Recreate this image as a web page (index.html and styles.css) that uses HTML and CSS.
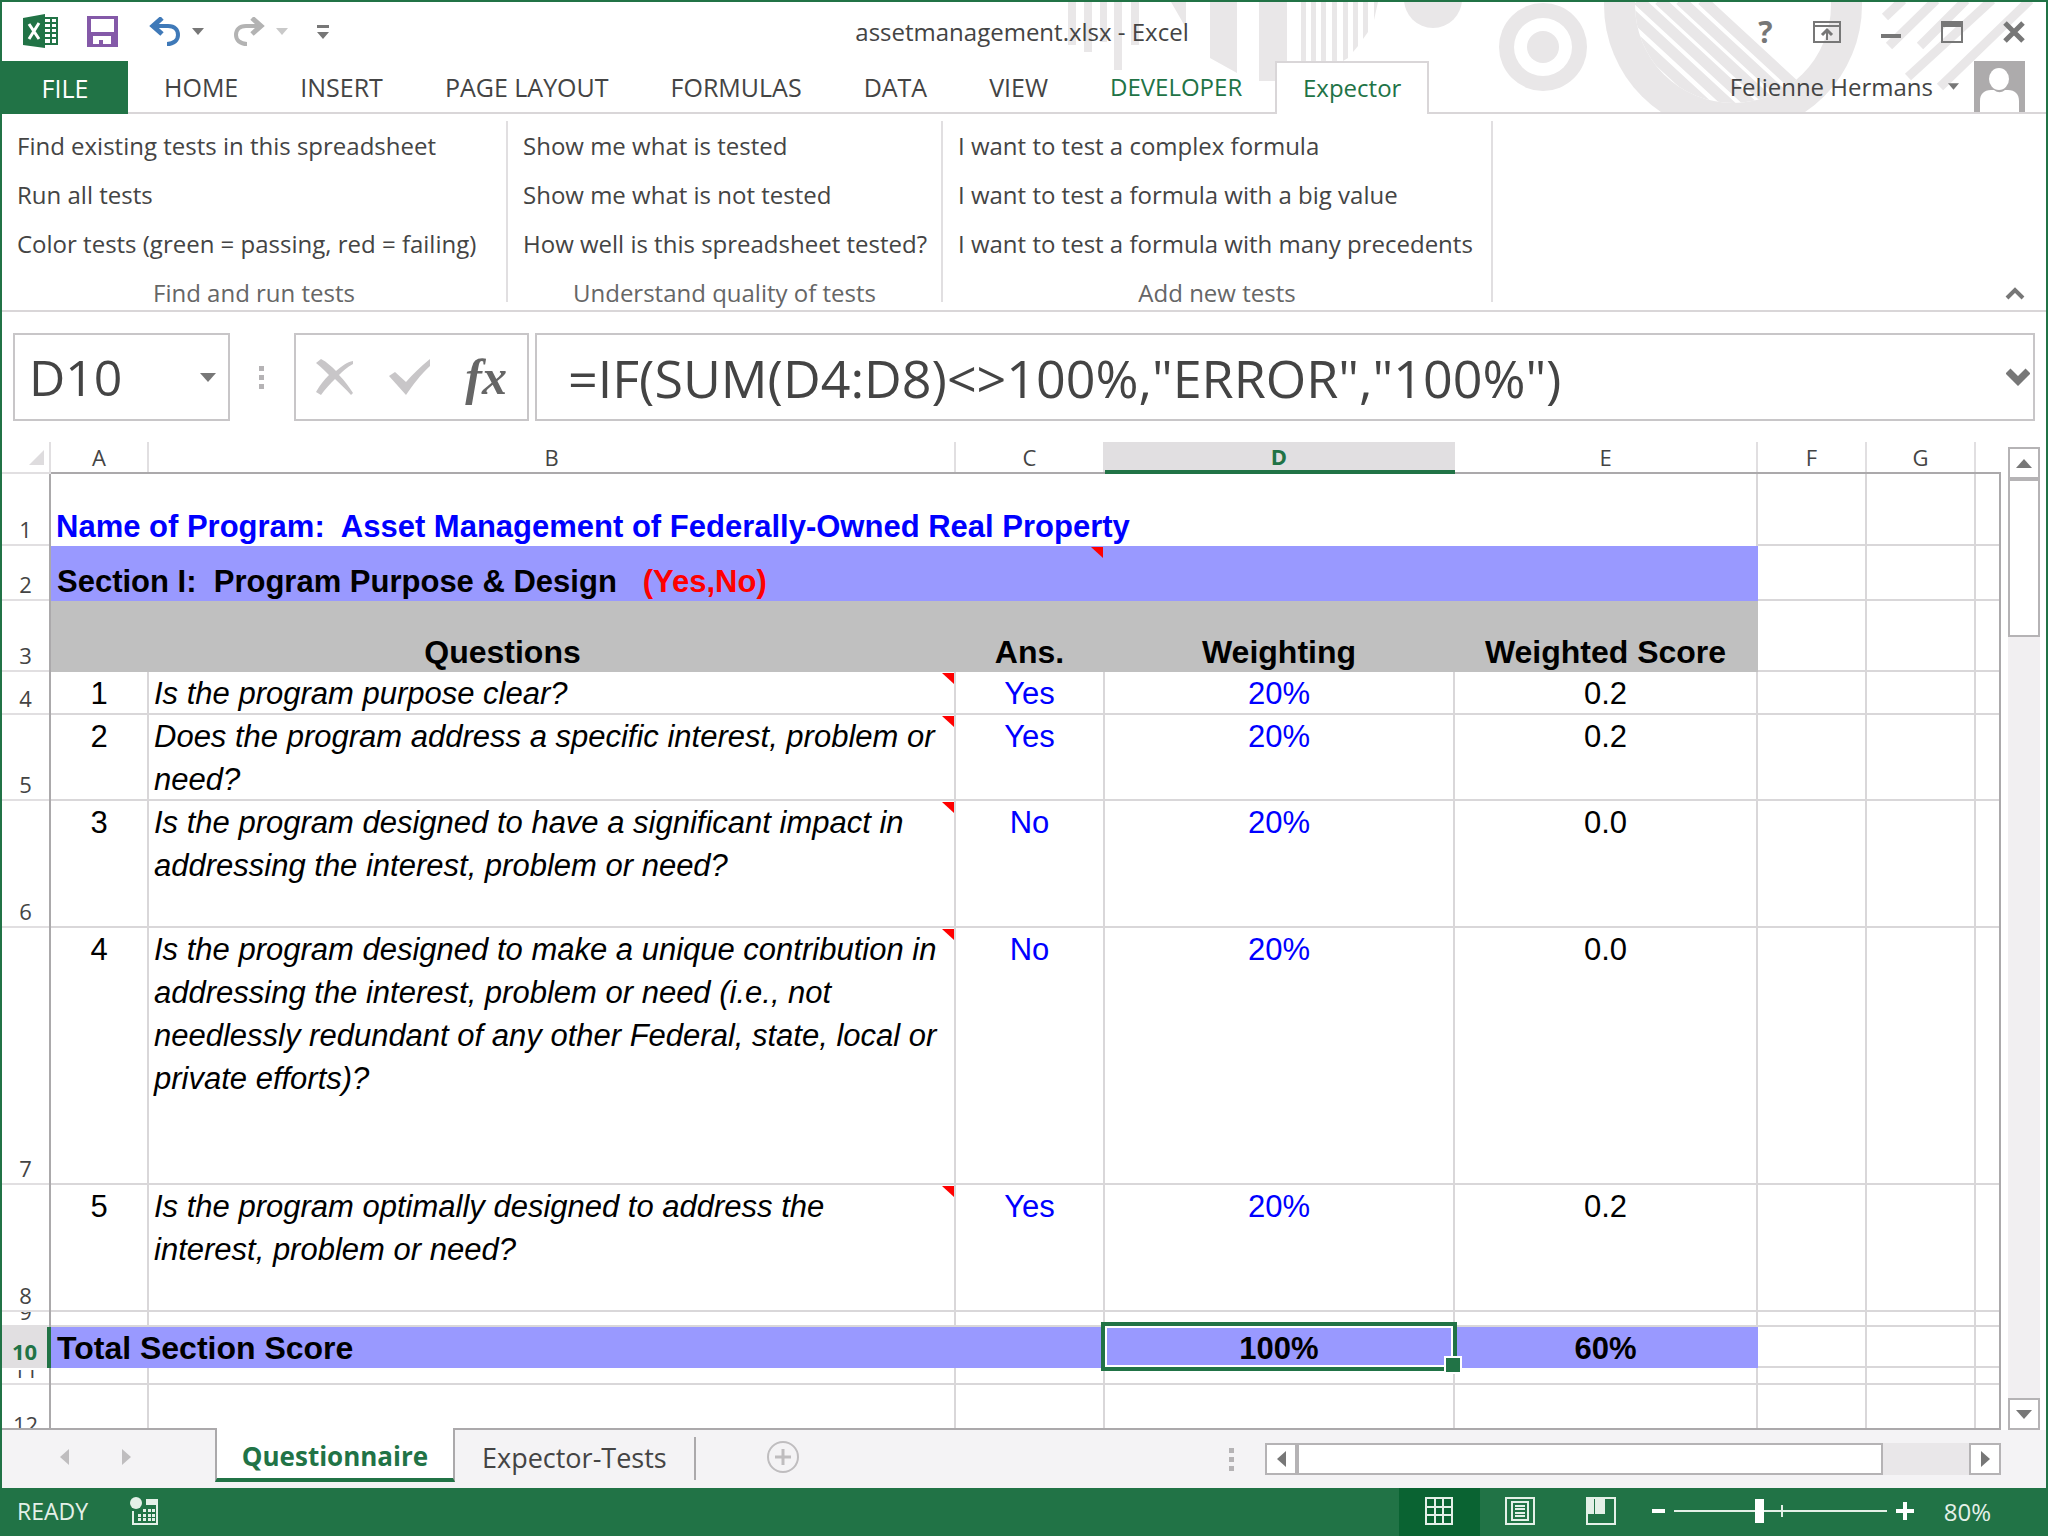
FILE: index.html
```html
<!DOCTYPE html>
<html lang="en">
  <head>
    <meta charset="UTF-8" />
    <meta name="viewport" content="width=device-width, initial-scale=1.0" />
    <title>assetmanagement.xlsx - Excel</title>
    <link rel="stylesheet" href="styles.css">
  </head>
  <body>
    <header class="app-header">
      <svg class="header-art" width="986" height="110" viewBox="1060 2 986 110" aria-hidden="true">
        <defs>
          <clipPath id="ringHole"><circle cx="1733" cy="5" r="98" /></clipPath>
        </defs>
        <g fill="#e9e7e8">
          <path d="M1068 2h8v43h-8zM1084 2h8v50h-8zM1100 2h7v40h-7zM1114 2h8v68h-8zM1131 2h8v43h-8z" />
          <path d="M1171 2h15v26zM1210 2h27v71l-27-15zM1259 2h28v79h-28z" />
          <path d="M1301 2h5v59h-5zM1311 2h5v59h-5zM1321 2h5v59h-5zM1332 2h5v59h-5zM1343 2h5v56l-5 3zM1353 2h5v44l-5 6zM1363 2h5v30l-5 7zM1374 2h4l-4 18z" />
          <circle cx="1433" cy="-1" r="29" />
          <circle cx="1543" cy="47" r="44" />
          <circle cx="1733" cy="5" r="129" />
        </g>
        <circle cx="1543" cy="47" r="29" fill="#fff" />
        <circle cx="1543" cy="47" r="16" fill="#e9e7e8" />
        <circle cx="1733" cy="5" r="98" fill="#fff" />
        <g clip-path="url(#ringHole)" stroke="#e9e7e8" stroke-width="11">
          <path d="M1593 0l130 120M1616 0l130 120M1638 0l130 120M1659 0l130 120M1680 0l130 120M1702 0l130 120" />
        </g>
        <path d="M1885 17l18-17M1889 46l47-46M1920 46l46-46M1908 77l84-77M1940 87l90-87" stroke="#e9e7e8" stroke-width="9" />
      </svg>

      <div class="titlebar">
        <div class="quick-access">
          <svg class="excel-logo" width="36" height="36" viewBox="0 0 36 36">
            <path fill="#fff" stroke="#217346" stroke-width="2" d="M20 4h14v26H20z" />
            <path stroke="#217346" stroke-width="2" d="M20 9h14M20 14h14M20 19h14M20 24h14M28 4v26" />
            <path fill="#217346" d="M0 4l22-4v34L0 31z" />
            <path stroke="#fff" stroke-width="3" d="M6 10l10 15M16 9L6 25" />
          </svg>
          <button type="button" class="qa-btn qa-save" aria-label="Save">
            <svg width="31" height="31" viewBox="0 0 31 31">
              <path fill="#8459a8" d="M0 0h31v31H0z" />
              <path fill="#fff" d="M4 3h23v13H4zM6 20h18v8h-8v-4h-4v4H6z" />
            </svg>
          </button>
          <button type="button" class="qa-btn qa-undo" aria-label="Undo">
            <svg width="32" height="30" viewBox="0 0 32 30" fill="none" stroke="#3f79b8">
              <path stroke-width="4" d="M5 9h14c7 0 10 4 10 9s-4 9-11 9" />
              <path stroke-width="5" d="M13 1L4 9l9 8" />
            </svg>
          </button>
          <button type="button" class="qa-btn qa-undo-menu" aria-label="Undo list"><svg width="12" height="7" viewBox="0 0 12 7"><path fill="#777" d="M0 0h12L6 7z" /></svg></button>
          <button type="button" class="qa-btn qa-redo" aria-label="Redo">
            <svg width="32" height="30" viewBox="0 0 32 30" fill="none" stroke="#b3b3b3">
              <path stroke-width="4" d="M27 9H13C6 9 3 13 3 18s4 9 11 9" />
              <path stroke-width="5" d="M19 1l9 8-9 8" />
            </svg>
          </button>
          <button type="button" class="qa-btn qa-redo-menu" aria-label="Redo list"><svg width="12" height="7" viewBox="0 0 12 7"><path fill="#c9c9c9" d="M0 0h12L6 7z" /></svg></button>
          <button type="button" class="qa-btn qa-custom" aria-label="Customize toolbar"><svg width="12" height="14" viewBox="0 0 12 14"><path fill="#777" d="M0 0h12v3H0zM0 7h12l-6 7z" /></svg></button>
        </div>
        <h1 class="doc-title">assetmanagement.xlsx - Excel</h1>
        <div class="window-buttons">
          <button type="button" class="win-btn win-help">?</button>
          <button type="button" class="win-btn" aria-label="Ribbon display">
            <svg width="28" height="22" viewBox="0 0 28 22" fill="none" stroke="#777" stroke-width="2">
              <path d="M1 1h26v20H1zM1 5h26M14 19V9" /><path stroke-width="3" d="M9 14l5-5 5 5" />
            </svg>
          </button>
          <button type="button" class="win-btn" aria-label="Minimize">
            <svg width="20" height="22" viewBox="0 0 20 22"><path fill="#777" d="M0 13h20v4H0z" /></svg>
          </button>
          <button type="button" class="win-btn" aria-label="Maximize">
            <svg width="22" height="22" viewBox="0 0 22 22"><path fill="#777" d="M0 0h22v22H0zM2 6v14h18V6z" fill-rule="evenodd" /></svg>
          </button>
          <button type="button" class="win-btn" aria-label="Close">
            <svg width="22" height="22" viewBox="0 0 22 22"><path stroke="#777" stroke-width="5" d="M2 2l18 18M20 2L2 20" /></svg>
          </button>
        </div>
      </div>

      <nav class="tabs">
        <button type="button" class="tab tab-file">FILE</button>
        <button type="button" class="tab">HOME</button>
        <button type="button" class="tab">INSERT</button>
        <button type="button" class="tab">PAGE LAYOUT</button>
        <button type="button" class="tab">FORMULAS</button>
        <button type="button" class="tab">DATA</button>
        <button type="button" class="tab">VIEW</button>
        <button type="button" class="tab tab-green">DEVELOPER</button>
        <button type="button" class="tab tab-green tab-active">Expector</button>
        <button type="button" class="account">
          Felienne Hermans
          <svg width="11" height="7" viewBox="0 0 12 7"><path fill="#777" d="M0 0h12L6 7z" /></svg>
          <svg class="avatar" width="51" height="51" viewBox="0 0 51 51">
            <path fill="#adabac" d="M0 0h51v51H0z" />
            <path fill="#fff" d="M6 51V40c0-7 4-11 11-11h3c4 3 7 3 11 0h3c7 0 11 4 11 11v11z" />
            <ellipse cx="25" cy="18" rx="10" ry="11" fill="#fff" />
          </svg>
        </button>
      </nav>
    </header>

    <section class="ribbon">
      <div class="ribbon-group group-find">
        <button type="button" class="ribbon-btn">Find existing tests in this spreadsheet</button>
        <button type="button" class="ribbon-btn">Run all tests</button>
        <button type="button" class="ribbon-btn">Color tests (green = passing, red = failing)</button>
        <div class="group-name">Find and run tests</div>
      </div>
      <div class="ribbon-group group-quality">
        <button type="button" class="ribbon-btn">Show me what is tested</button>
        <button type="button" class="ribbon-btn">Show me what is not tested</button>
        <button type="button" class="ribbon-btn">How well is this spreadsheet tested?</button>
        <div class="group-name">Understand quality of tests</div>
      </div>
      <div class="ribbon-group group-new">
        <button type="button" class="ribbon-btn">I want to test a complex formula</button>
        <button type="button" class="ribbon-btn">I want to test a formula with a big value</button>
        <button type="button" class="ribbon-btn">I want to test a formula with many precedents</button>
        <div class="group-name">Add new tests</div>
      </div>
      <button type="button" class="ribbon-collapse" aria-label="Collapse ribbon">
        <svg width="20" height="14" viewBox="0 0 20 14" fill="none"><path stroke="#777" stroke-width="4" d="M2 12l8-8 8 8" /></svg>
      </button>
    </section>

    <section class="formula-bar">
      <div class="box name-box">
        <input type="text" class="name-input" aria-label="Name box" value="D10" />
        <button type="button" class="box-btn" aria-label="Names"><svg width="16" height="9" viewBox="0 0 16 9"><path fill="#777" d="M0 0h16L8 9z" /></svg></button>
      </div>
      <div class="dots"></div>
      <div class="box fx-box">
        <button type="button" class="box-btn" aria-label="Cancel">
          <svg width="38" height="36" viewBox="0 0 38 36"><path fill="#c8c6c8" d="M0 4l5-4c6 3 11 8 15 12C26 7 31 3 37 2v3c-6 3-10 7-14 11 6 6 10 12 14 18l-2 2C30 30 24 25 19 20 14 25 9 30 5 36l-5-3c4-7 8-12 13-17C9 12 5 8 0 4z" /></svg>
        </button>
        <button type="button" class="box-btn" aria-label="Enter">
          <svg width="41" height="36" viewBox="0 0 41 36"><path fill="#c8c6c8" d="M0 17l6-4 11 10C24 15 32 7 41 0v7C31 16 24 26 17 36z" /></svg>
        </button>
        <button type="button" class="box-btn fx" aria-label="Insert function">fx</button>
      </div>
      <div class="box formula-box">
        <input type="text" class="formula-input" aria-label="Formula" value='=IF(SUM(D4:D8)&lt;&gt;100%,"ERROR","100%")' />
        <button type="button" class="box-btn" aria-label="Expand formula bar"><svg width="24" height="18" viewBox="0 0 24 18" fill="none"><path stroke="#777" stroke-width="7" d="M2 3l10 10L22 3" /></svg></button>
      </div>
    </section>

    <main class="workspace">
      <div class="grid">
        <table class="sheet">
          <colgroup>
            <col class="col-num"><col class="col-a"><col class="col-b"><col class="col-c"><col class="col-d"><col class="col-e"><col class="col-f"><col class="col-f"><col>
          </colgroup>
          <thead>
            <tr>
              <th class="corner"><svg width="15" height="15" viewBox="0 0 15 15"><path fill="#dedcde" d="M15 0v15H0z" /></svg></th>
              <th>A</th><th>B</th><th>C</th><th class="selected">D</th><th>E</th><th>F</th><th>G</th><th></th>
            </tr>
          </thead>
          <tbody>
            <tr class="row-1">
              <th>1</th>
              <td colspan="5" class="program">Name of Program:&nbsp; Asset Management of Federally-Owned Real Property</td>
              <td></td><td></td><td></td>
            </tr>
            <tr class="row-2">
              <th>2</th>
              <td colspan="3" class="blue note">Section I:&nbsp; Program Purpose &amp; Design&nbsp;&nbsp; <span class="red">(Yes,No)</span></td>
              <td class="blue"></td><td class="blue"></td>
              <td></td><td></td><td></td>
            </tr>
            <tr class="row-3">
              <th>3</th>
              <td colspan="2" class="gray">Questions</td><td class="gray">Ans.</td><td class="gray">Weighting</td><td class="gray">Weighted Score</td>
              <td></td><td></td><td></td>
            </tr>
            <tr class="row-4">
              <th>4</th>
              <td>1</td><td class="question note">Is the program purpose clear?</td><td class="entry">Yes</td><td class="entry">20%</td><td>0.2</td>
              <td></td><td></td><td></td>
            </tr>
            <tr class="row-5">
              <th>5</th>
              <td>2</td><td class="question note">Does the program address a specific interest, problem or need?</td><td class="entry">Yes</td><td class="entry">20%</td><td>0.2</td>
              <td></td><td></td><td></td>
            </tr>
            <tr class="row-6">
              <th>6</th>
              <td>3</td><td class="question note">Is the program designed to have a significant impact in addressing the interest, problem or need?</td><td class="entry">No</td><td class="entry">20%</td><td>0.0</td>
              <td></td><td></td><td></td>
            </tr>
            <tr class="row-7">
              <th>7</th>
              <td>4</td><td class="question note">Is the program designed to make a unique contribution in addressing the interest, problem or need (i.e., not needlessly redundant of any other Federal, state, local or private efforts)?</td><td class="entry">No</td><td class="entry">20%</td><td>0.0</td>
              <td></td><td></td><td></td>
            </tr>
            <tr class="row-8">
              <th>8</th>
              <td>5</td><td class="question note">Is the program optimally designed to address the<br>interest, problem or need?</td><td class="entry">Yes</td><td class="entry">20%</td><td>0.2</td>
              <td></td><td></td><td></td>
            </tr>
            <tr class="row-9">
              <th class="short"><div class="clip">9</div></th>
              <td></td><td></td><td></td><td></td><td></td><td></td><td></td><td></td>
            </tr>
            <tr class="row-10">
              <th class="selected">10</th>
              <td colspan="3" class="blue total">Total Section Score</td><td class="blue active-cell">100%</td><td class="blue">60%</td>
              <td></td><td></td><td></td>
            </tr>
            <tr class="row-11">
              <th class="short"><div class="clip">11</div></th>
              <td></td><td></td><td></td><td></td><td></td><td></td><td></td><td></td>
            </tr>
            <tr class="row-12">
              <th>12</th>
              <td></td><td></td><td></td><td></td><td></td><td></td><td></td><td></td>
            </tr>
          </tbody>
        </table>
      </div>
      <div class="vscroll">
        <button type="button" class="scroll-btn" aria-label="Scroll up"><svg width="16" height="9" viewBox="0 0 16 9"><path fill="#777" d="M0 9h16L8 0z" /></svg></button>
        <div class="vthumb"></div>
        <button type="button" class="scroll-btn scroll-down" aria-label="Scroll down"><svg width="16" height="9" viewBox="0 0 16 9"><path fill="#777" d="M0 0h16L8 9z" /></svg></button>
      </div>
    </main>

    <nav class="sheet-bar">
      <div class="sheet-nav">
        <button type="button" class="nav-btn" aria-label="Previous sheet"><svg width="9" height="16" viewBox="0 0 9 16"><path fill="#bfbdbf" d="M9 0v16L0 8z" /></svg></button>
        <button type="button" class="nav-btn" aria-label="Next sheet"><svg width="9" height="16" viewBox="0 0 9 16"><path fill="#bfbdbf" d="M0 0v16l9-8z" /></svg></button>
      </div>
      <button type="button" class="sheet-tab sheet-active">Questionnaire</button>
      <button type="button" class="sheet-tab">Expector-Tests</button>
      <button type="button" class="nav-btn add-sheet" aria-label="New sheet">
        <svg width="34" height="34" viewBox="0 0 34 34" fill="none" stroke="#bfbdbf"><circle cx="17" cy="17" r="15" stroke-width="2" /><path stroke-width="3" d="M17 9v16M9 17h16" /></svg>
      </button>
      <div class="hscroll-wrap">
        <div class="dots"></div>
        <div class="hscroll">
          <button type="button" class="scroll-btn" aria-label="Scroll left"><svg width="9" height="16" viewBox="0 0 9 16"><path fill="#777" d="M9 0v16L0 8z" /></svg></button>
          <div class="hthumb"></div>
          <button type="button" class="scroll-btn" aria-label="Scroll right"><svg width="9" height="16" viewBox="0 0 9 16"><path fill="#777" d="M0 0v16l9-8z" /></svg></button>
        </div>
      </div>
    </nav>

    <footer class="status-bar">
      <span class="status-text">READY</span>
      <button type="button" class="status-btn" aria-label="Record macro">
        <svg width="28" height="28" viewBox="0 0 28 28" fill="#e4f0e8">
          <path d="M16 2h12v26H2V14h2v12h22V8H16z" /><circle cx="6" cy="6" r="6" />
          <path d="M13 12h3v3h-3zM18 12h3v3h-3zM22 12h3v3h-3zM8 17h3v3H8zM13 17h3v3h-3zM18 17h3v3h-3zM22 17h3v3h-3zM8 21h3v3H8zM13 21h3v3h-3zM18 21h3v3h-3zM22 21h3v3h-3z" />
        </svg>
      </button>
      <div class="views">
        <button type="button" class="view-btn view-active" aria-label="Normal view">
          <svg width="28" height="28" viewBox="0 0 28 28" fill="none" stroke="#e4f0e8" stroke-width="2"><path d="M1 1h26v26H1zM10 1v26M18 1v26M1 10h26M1 18h26" /></svg>
        </button>
        <button type="button" class="view-btn" aria-label="Page layout view">
          <svg width="30" height="28" viewBox="0 0 30 28" fill="none" stroke="#e4f0e8" stroke-width="2"><path d="M1 1h28v26H1zM7 5h16v18H7zM10 9h10M10 12h10M10 16h10M10 19h10" /></svg>
        </button>
        <button type="button" class="view-btn" aria-label="Page break view">
          <svg width="30" height="28" viewBox="0 0 30 28" fill="none" stroke="#e4f0e8" stroke-width="2"><path d="M1 1h28v26H1z" /><path fill="#e4f0e8" stroke="none" d="M1 1h7v16H1zM9 1h10v16H9z" /></svg>
        </button>
      </div>
      <div class="zoom">
        <button type="button" class="status-btn" aria-label="Zoom out"><svg width="13" height="18" viewBox="0 0 13 18"><path fill="#fff" d="M0 7h13v4H0z" /></svg></button>
        <input type="range" class="zoom-slider" aria-label="Zoom" min="0" max="100" value="40" />
        <button type="button" class="status-btn" aria-label="Zoom in"><svg width="18" height="18" viewBox="0 0 18 18"><path fill="#fff" d="M7 0h4v18H7zM0 7h18v4H0z" /></svg></button>
        <span class="zoom-value">80%</span>
      </div>
    </footer>
  </body>
</html>
```
FILE: styles.css
```css
* {
  box-sizing: border-box;
}

body {
  margin: 0;
  height: 100vh;
  display: flex;
  flex-direction: column;
  border: 2px solid #217346;
  border-bottom: 0;
  background-color: #fff;
  color: #444;
  font-family: 'Open Sans', 'Noto Sans', sans-serif;
  font-size: 24px;
  overflow: hidden;
}

button,
input {
  margin: 0;
  padding: 0;
  border: 0;
  background: none;
  color: inherit;
  font: inherit;
}

svg {
  display: block;
  flex: none;
}

/* title bar and tabs */
.app-header {
  position: relative;
}

.header-art {
  position: absolute;
  top: 0;
  right: 0;
}

.titlebar {
  position: relative;
  height: 59px;
  display: grid;
  grid-template-columns: 1fr auto 1fr;
  align-items: center;
}

.quick-access {
  display: flex;
  align-items: center;
  padding-left: 21px;
}

.qa-save {
  margin-left: 28px;
}

.qa-undo {
  margin-left: 31px;
}

.qa-undo-menu,
.qa-redo-menu {
  margin-left: 11px;
}

.qa-redo,
.qa-custom {
  margin-left: 29px;
}

.doc-title {
  margin: 0;
  padding-right: 4px;
  font-size: 24px;
  font-weight: 400;
}

.window-buttons {
  display: flex;
  justify-content: flex-end;
  align-items: center;
  gap: 40px;
  padding-right: 21px;
  color: #777;
}

.win-help {
  width: 15px;
  font-size: 30px;
  font-weight: 700;
  line-height: 30px;
}

.tabs {
  position: relative;
  height: 53px;
  display: flex;
  align-items: stretch;
  border-bottom: 2px solid #d9d6d8;
}

.tab {
  padding: 0 31px;
  font-size: 25px;
}

.tab-file {
  width: 126px;
  margin: 0 5px -2px 0;
  background-color: #217346;
  color: #fff;
}

.tab-green {
  font-size: 24px;
  color: #217346;
}

.tab-active {
  width: 154px;
  padding: 0 0 2px;
  margin: 0 0 -2px 2px;
  border: 2px solid #d9d6d8;
  border-bottom: 0;
  background-color: #fff;
}

.account {
  display: flex;
  align-items: center;
  gap: 15px;
  margin-left: auto;
  padding-right: 21px;
}

/* ribbon */
.ribbon {
  height: 198px;
  display: flex;
  padding-top: 7px;
  border-bottom: 2px solid #d9d6d8;
}

.ribbon-group {
  height: 181px;
  display: flex;
  flex-direction: column;
  padding-left: 15px;
  border-right: 2px solid #e1dfe1;
}

.group-find {
  width: 506px;
}

.group-quality {
  width: 435px;
}

.group-new {
  width: 550px;
}

.ribbon-btn {
  height: 49px;
  flex: none;
  text-align: left;
  white-space: nowrap;
}

.group-name {
  padding-right: 15px;
  line-height: 49px;
  text-align: center;
  color: #666;
}

.ribbon-collapse {
  align-self: flex-end;
  margin: 0 21px 10px auto;
}

/* formula bar */
.formula-bar {
  display: flex;
  align-items: center;
  padding: 21px 11px;
}

.box {
  height: 88px;
  display: flex;
  align-items: center;
  border: 2px solid #c8c6c8;
}

.name-box {
  width: 217px;
  padding: 0 12px 0 14px;
}

.name-input {
  width: 100%;
  min-width: 0;
  font-size: 50px;
}

.dots {
  width: 5px;
  height: 23px;
  background: repeating-linear-gradient(#b5b3b5 0 5px, transparent 5px 9px);
}

.formula-bar .dots {
  margin: 0 30px 0 29px;
}

.fx-box {
  width: 235px;
  justify-content: space-between;
  padding: 0 20px;
  margin-right: 6px;
}

.fx {
  color: #666;
  font: italic bold 50px/50px 'Liberation Serif', serif;
}

.formula-box {
  flex: 1;
  padding: 0 3px 0 31px;
}

.formula-input {
  flex: 1;
  min-width: 0;
  font-size: 52px;
}

/* worksheet */
.workspace {
  flex: 1;
  min-height: 0;
  display: flex;
}

.grid {
  flex: 1;
  min-width: 0;
  overflow: hidden;
  border-bottom: 2px solid #aba9ab;
}

.sheet {
  width: 100%;
  table-layout: fixed;
  border-collapse: separate;
  border-spacing: 0;
}

.col-num {
  width: 49px;
}

.col-a {
  width: 98px;
}

.col-b {
  width: 807px;
}

.col-c {
  width: 149px;
}

.col-d {
  width: 350px;
}

.col-e {
  width: 303px;
}

.col-f {
  width: 109px;
}

.sheet th {
  padding: 0;
  font-size: 22px;
  font-weight: 400;
  line-height: 26px;
}

.sheet thead th {
  height: 32px;
  padding-right: 2px;
  box-shadow: inset -2px 0 #e1dfe1;
  border-bottom: 2px solid #aba9ab;
}

.sheet thead th:last-child {
  box-shadow: none;
}

.sheet thead .corner {
  border-bottom-color: #e1dfe1;
}

.corner svg {
  margin-left: 27px;
}

.sheet thead .selected {
  background-color: #e1dfe1;
  border-bottom: 4px solid #217346;
  color: #217346;
  font-weight: 700;
}

.sheet tbody th {
  padding-bottom: 4px;
  vertical-align: bottom;
  box-shadow: inset 0 -2px #e1dfe1;
  border-right: 2px solid #aba9ab;
}

.sheet tbody .selected {
  background-color: #e1dfe1;
  border-right: 4px solid #217346;
  color: #217346;
  font-weight: 700;
}

.sheet td {
  position: relative;
  padding: 0 2px 0 0;
  box-shadow: inset -2px -2px #d9d7d9;
  color: #000;
  font-family: 'Liberation Sans', Arial, sans-serif;
  font-size: 31px;
  line-height: 43px;
  text-align: center;
  vertical-align: top;
}

.sheet td:last-child {
  box-shadow: inset 0 -2px #d9d7d9;
  border-right: 2px solid #aba9ab;
}

.sheet .program,
.sheet .blue,
.sheet .gray {
  font-weight: 700;
  line-height: 39px;
  vertical-align: bottom;
}

.sheet .program {
  padding-left: 5px;
  box-shadow: inset -2px 0 #d9d7d9;
  color: #00f;
  text-align: left;
}

.sheet .blue {
  background-color: #99f;
  box-shadow: none;
}

.sheet .gray {
  background-color: #c0c0c0;
  box-shadow: none;
  font-size: 32px;
}

.row-2 .note,
.sheet .total {
  padding-left: 6px;
  text-align: left;
}

.sheet .total {
  font-size: 32px;
}

.red {
  color: #f00;
}

.sheet .question {
  padding: 0 5px;
  font-style: italic;
  text-align: left;
}

.sheet .entry {
  color: #00f;
}

/* comment marker */
.note::after {
  content: '';
  position: absolute;
  top: 1px;
  right: 2px;
  width: 12px;
  height: 11px;
  background-color: #f00;
  clip-path: polygon(0 0, 100% 0, 100% 100%);
}

.active-cell::before {
  content: '';
  position: absolute;
  z-index: 1;
  top: -5px;
  right: -2px;
  bottom: -3px;
  left: -4px;
  border: 4px solid #217346;
  box-shadow: inset 0 0 0 2px #fff;
}

.active-cell::after {
  content: '';
  position: absolute;
  z-index: 2;
  right: -7px;
  bottom: -6px;
  width: 14px;
  height: 14px;
  border: 2px solid #fff;
  background-color: #217346;
}

.row-1 {
  height: 72px;
}

.row-2 {
  height: 55px;
}

.row-3 {
  height: 71px;
}

.row-4 {
  height: 43px;
}

.row-5 {
  height: 86px;
}

.row-6,
.row-8 {
  height: 127px;
}

.row-7 {
  height: 257px;
}

.row-9 {
  height: 15px;
}

.row-10 {
  height: 41px;
}

.row-11 {
  height: 17px;
}

.row-12 {
  height: 56px;
}

.sheet tbody .short {
  padding: 0;
}

/* number of a row that is lower than its text */
.clip {
  height: 15px;
  display: flex;
  align-items: flex-end;
  justify-content: center;
  padding-bottom: 3px;
  overflow: hidden;
}

/* scroll bars */
.vscroll {
  display: flex;
  flex-direction: column;
  align-items: center;
  width: 45px;
  padding: 5px 6px 0 7px;
  background: #f1eff1 content-box;
}

.scroll-btn {
  width: 32px;
  height: 32px;
  flex: none;
  display: flex;
  align-items: center;
  justify-content: center;
  border: 2px solid #b5b3b5;
  background-color: #fff;
}

.vthumb {
  width: 32px;
  height: 158px;
  border: 2px solid #b5b3b5;
  background-color: #fff;
}

.scroll-down {
  margin-top: auto;
}

.sheet-bar {
  height: 58px;
  display: flex;
  align-items: flex-start;
  background-color: #f4f3f5;
}

.sheet-nav {
  width: 213px;
  height: 54px;
  display: flex;
  align-items: center;
  gap: 53px;
  padding-left: 58px;
}

.sheet-tab {
  height: 43px;
  margin-top: 7px;
  padding: 0 27px 2px;
  border-right: 2px solid #aba9ab;
  font-size: 27px;
}

.sheet-active {
  position: relative;
  width: 240px;
  height: 54px;
  margin-top: -2px;
  padding: 6px 0 0;
  border-left: 2px solid #aba9ab;
  border-bottom: 4px solid #217346;
  background-color: #fff;
  color: #217346;
  font-size: 26px;
  font-weight: 700;
}

.add-sheet {
  margin: 10px 0 0 70px;
}

.hscroll-wrap {
  flex: 1;
  display: flex;
  align-items: center;
  justify-content: flex-end;
  gap: 31px;
  padding: 13px 45px 0 0;
}

.hscroll {
  width: 736px;
  display: flex;
  background-color: #e9e7e9;
}

.hthumb {
  flex: 1;
  margin-right: 86px;
  border: 2px solid #b5b3b5;
  background-color: #fff;
}

/* status bar */
.status-bar {
  height: 48px;
  display: flex;
  align-items: center;
  margin: 0 -2px;
  padding: 0 0 2px 17px;
  background-color: #217346;
  color: #e4f0e8;
}

.status-text {
  margin-right: 42px;
  font-size: 23px;
}

.views {
  height: 48px;
  display: flex;
  margin: 0 0 -2px auto;
}

.view-btn {
  width: 81px;
  display: flex;
  align-items: center;
  justify-content: center;
  padding-bottom: 2px;
}

.view-active {
  background-color: #0a6332;
}

.zoom {
  display: flex;
  align-items: center;
  gap: 9px;
  padding: 0 57px 0 10px;
}

.zoom-slider {
  width: 213px;
  height: 24px;
  appearance: none;
  background:
    linear-gradient(#e4f0e8, #e4f0e8) 107px center / 2px 12px no-repeat,
    linear-gradient(#e4f0e8, #e4f0e8) center / 100% 2px no-repeat;
}

.zoom-slider::-webkit-slider-thumb {
  appearance: none;
  width: 9px;
  height: 24px;
  background-color: #fff;
}

.zoom-value {
  margin-left: 21px;
}
```
